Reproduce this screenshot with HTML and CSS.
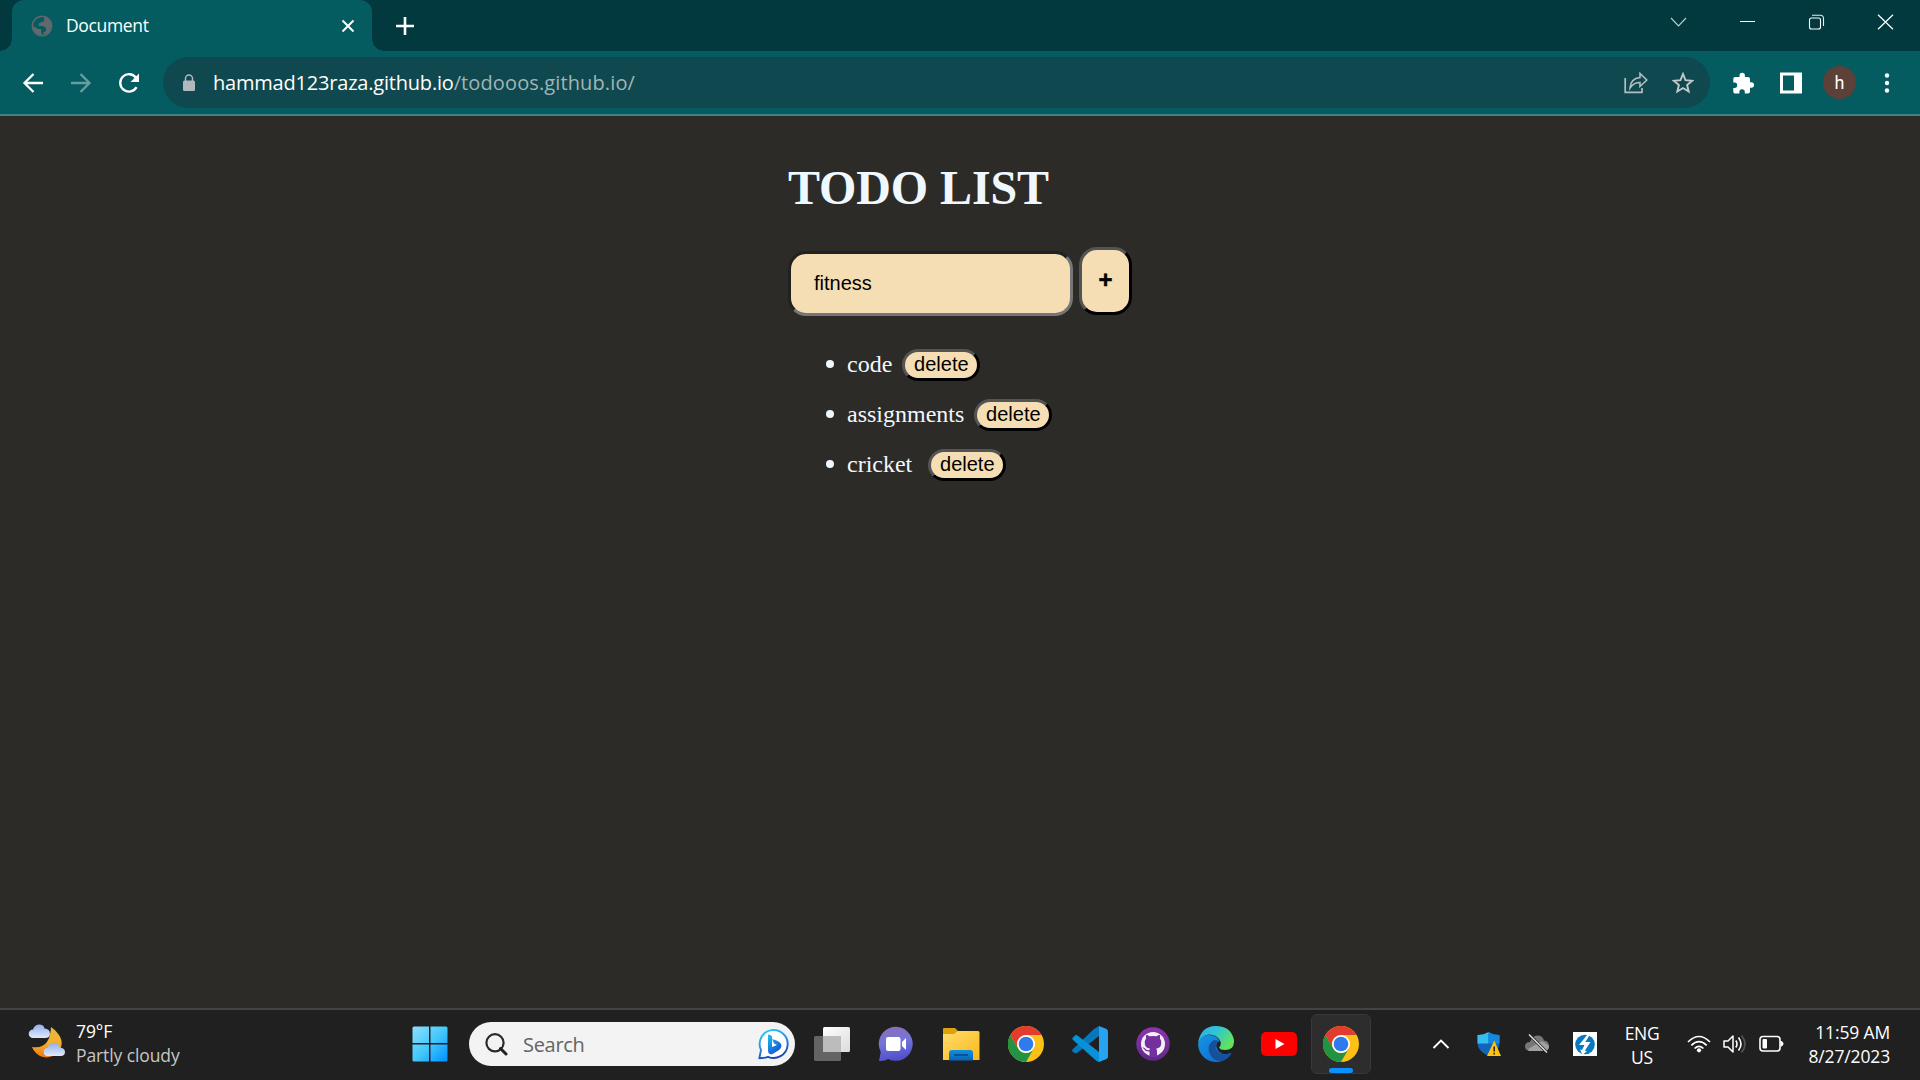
FILE: index.html
```html
<!DOCTYPE html>
<html lang="en">
<head>
<meta charset="utf-8">
<title>Document</title>
<link rel="stylesheet" href="styles.css">
</head>
<body>
<svg class="defs" width="0" height="0" aria-hidden="true">
  <defs>
    <linearGradient id="win" x1="0" y1="0" x2="1" y2="1"><stop offset="0" stop-color="#8be0ff"/><stop offset=".5" stop-color="#45c8fb"/><stop offset="1" stop-color="#0090ff"/></linearGradient>
    <linearGradient id="moon" x1="0" y1="0" x2="0" y2="1"><stop offset="0" stop-color="#e0b84c"/><stop offset=".5" stop-color="#f7b12c"/><stop offset="1" stop-color="#f07818"/></linearGradient>
    <linearGradient id="cloud" x1="0" y1="0" x2="0" y2="1"><stop offset="0" stop-color="#8fb0ee"/><stop offset="1" stop-color="#e2e9fb"/></linearGradient>
    <linearGradient id="bing" x1="0" y1="0" x2=".6" y2="1"><stop offset="0" stop-color="#1cc4f4"/><stop offset="1" stop-color="#1554d4"/></linearGradient>
    <linearGradient id="bingRing" x1="0" y1="0" x2=".4" y2="1"><stop offset="0" stop-color="#22d3ee"/><stop offset=".5" stop-color="#3294ea"/><stop offset="1" stop-color="#1747b8"/></linearGradient>
    <linearGradient id="chat" x1="0" y1="0" x2=".2" y2="1"><stop offset="0" stop-color="#8f6cb8"/><stop offset=".5" stop-color="#7276d8"/><stop offset="1" stop-color="#5450cc"/></linearGradient>
    <linearGradient id="folder" x1="0" y1="0" x2="1" y2="1"><stop offset="0" stop-color="#ffdc70"/><stop offset="1" stop-color="#fcb816"/></linearGradient>
    <linearGradient id="tray" x1="0" y1="0" x2="0" y2="1"><stop offset="0" stop-color="#1090e0"/><stop offset="1" stop-color="#0a63b4"/></linearGradient>
    <linearGradient id="git" x1="0" y1="0" x2="0" y2="1"><stop offset="0" stop-color="#8d35ae"/><stop offset="1" stop-color="#602889"/></linearGradient>
    <linearGradient id="edgeTop" x1="0" y1="0" x2="1" y2=".5"><stop offset="0" stop-color="#32a8f0"/><stop offset=".5" stop-color="#2fc5d4"/><stop offset="1" stop-color="#62e35c"/></linearGradient>
    <linearGradient id="edgeLeft" x1="0" y1="0" x2="1" y2="1"><stop offset="0" stop-color="#1596e4"/><stop offset="1" stop-color="#1262ca"/></linearGradient>
    <linearGradient id="task" x1="0" y1="0" x2="1" y2="1"><stop offset="0" stop-color="#fff"/><stop offset="1" stop-color="#dcdcdc"/></linearGradient>
    <symbol id="chrome" viewBox="0 0 36 36">
      <circle cx="18" cy="18" r="18" fill="#fbc116"/>
      <path d="M2.4 9A18 18 0 0 0 18 36L25.8 22.5A9 9 0 0 1 10.2 22.5Z" fill="#229342"/>
      <path d="M3.6 7.2 2.4 9 10.2 22.500 9 18A9 9 0 0 1 18 9H33.6A18 18 0 0 0 3.6 7.2Z" fill="#e33b2e"/>
      <circle cx="18" cy="18" r="9" fill="#fff"/><circle cx="18" cy="18" r="7.3" fill="#2f7bed"/>
    </symbol>
  </defs>
</svg>

<header class="tab-strip">
  <div class="tab">
    <svg class="favicon" width="22" height="22" viewBox="0 0 22 22"><circle cx="11" cy="11" r="9.7" fill="#045b60" stroke="#62686c" stroke-width="1.5"/><path d="M10 2Q5 2 2 8v3l5 3h3v2l1 4q-7 1-9-8Q1 1 10 2ZM13 2Q20 4 20 11q0 5-5 8-3 1-3-1l3-2v-3l-3-2H8V8l3-1q3 0 2-5Z" fill="#62686c"/></svg>
    <span class="tab-title">Document</span>
    <svg class="tab-close" width="14" height="14" viewBox="0 0 14 14"><path d="M1.5 1.5l11 11m0-11l-11 11" stroke="#fff" stroke-width="2"/></svg>
  </div>
  <svg class="new-tab" width="18" height="18" viewBox="0 0 18 18"><path d="M9 0v18M0 9h18" stroke="#fff" stroke-width="2.6"/></svg>
  <div class="window-controls">
    <svg width="17" height="16" viewBox="0 0 17 16"><path d="M1 4l7.5 8L16 4" fill="none" stroke="#bed0d1" stroke-width="1.1"/></svg>
    <svg width="17" height="16" viewBox="0 0 17 16"><path d="M1 7.5h15" stroke="#fff"/></svg>
    <svg width="17" height="16" viewBox="0 0 17 16"><rect x="1.5" y="4" width="11" height="11" rx="2" fill="none" stroke="#fff" stroke-width="1.1"/><path d="M4 1.3h8.5a3 3 0 0 1 3 3V12" fill="none" stroke="#e5eded" stroke-width="1.1"/></svg>
    <svg width="17" height="16" viewBox="0 0 17 16"><path d="M1 .8l15 14.5M16 .8L1 15.300" stroke="#fff" stroke-width="1.2"/></svg>
  </div>
</header>

<nav class="toolbar">
  <div class="nav-buttons">
    <svg width="22" height="22" viewBox="0 0 22 22"><path d="M21 11H3M11.500 2L2.500 11l9 9" fill="none" stroke="#fff" stroke-width="2.300"/></svg>
    <svg width="22" height="22" viewBox="0 0 22 22"><path d="M1 11h18M10.500 2l9 9-9 9" fill="none" stroke="#6a9da0" stroke-width="2.300"/></svg>
    <svg width="22" height="22" viewBox="0 0 22 22"><path d="M18.500 15.200A8.700 8.700 0 1 1 17.800 5.500" fill="none" stroke="#fff" stroke-width="2.400"/><path d="M21 1.500V10h-8.500Z" fill="#fff"/></svg>
  </div>
  <div class="omnibox">
    <svg width="12" height="18" viewBox="0 0 12 18"><path d="M2.500 8V4.500a3.500 3.500 0 0 1 7 0V8" fill="none" stroke="#b0b9bd" stroke-width="1.500"/><rect y="6.500" width="12" height="10.500" rx="1.500" fill="#b0b9bd"/></svg>
    <div class="url"><span class="host">hammad123raza.github.io</span><span class="path">/todooos.github.io/</span></div>
    <svg class="share" width="24" height="22" viewBox="0 0 24 22"><path d="M1.200 6v14.300H18V16" fill="none" stroke="#b2bfc1" stroke-width="1.700"/><path d="M6 16Q6.500 6.500 16 5.500V1.500L22.800 8 16 14.500V10.500Q9.500 10.500 6 16Z" fill="none" stroke="#b2bfc1" stroke-width="1.600"/></svg>
    <svg width="22" height="22" viewBox="0 0 22 22"><path d="M11 2l2.500 6.200 6.700.5-5.100 4.300 1.600 6.500L11 16l-5.700 3.500 1.600-6.500L1.800 8.700l6.700-.5Z" fill="none" stroke="#c1cacc" stroke-width="1.900"/></svg>
  </div>
  <div class="actions">
    <svg width="22" height="22" viewBox="0 0 22 22"><path d="M2 5h4.500V3.500a2.700 2.700 0 0 1 5.400 0V5H15q2 0 2 2v3.300h1.300a2.700 2.700 0 0 1 0 5.400H17V19.500q0 2-2 2h-3.200V20a2.700 2.700 0 0 0-5.400 0v1.500H2q-1.700 0-1.700-1.700V16H1.500a2.700 2.700 0 0 0 0-5.400H.3V7Q.3 5 2 5Z" fill="#fff"/></svg>
    <svg width="22" height="22" viewBox="0 0 22 22"><path d="M0 .5h22v21H0ZM3 3.500v15h11v-15Z" fill="#fff" fill-rule="evenodd"/></svg>
    <span class="avatar">h</span>
    <svg class="menu" width="6" height="20" viewBox="0 0 6 20"><circle cx="3" cy="2.500" r="2.200" fill="#fff"/><circle cx="3" cy="10" r="2.200" fill="#fff"/><circle cx="3" cy="17.500" r="2.200" fill="#fff"/></svg>
  </div>
</nav>

<main class="page">
  <div class="todo">
    <h1>TODO LIST</h1>
    <form class="entry">
      <input class="entry-input" type="text" value="fitness">
      <button class="add" type="button">+</button>
    </form>
    <ul class="items">
      <li>code<button class="delete" type="button">delete</button></li>
      <li>assignments<button class="delete" type="button">delete</button></li>
      <li>cricket&nbsp;<button class="delete" type="button">delete</button></li>
    </ul>
  </div>
</main>

<footer class="taskbar">
  <div class="weather">
    <svg width="38" height="36" viewBox="0 0 38 36"><path d="M23 3C30 8 38 17 31 27 23 37 9 35 4 23q18 3 19-20Z" fill="url(#moon)"/><path d="M5 14a4.300 4.300 0 0 1 0-8.600Q7 0 12 .5q4 .5 4.500 4Q22 5 22 9.500 22 14 17 14Z" fill="url(#cloud)"/><path d="M20 32a4 4 0 0 1-.5-8Q22 18 27.500 19q4.500 1 4.500 4.500 5 .5 5 4.500t-4.500 4Z" fill="url(#cloud)"/></svg>
    <div class="weather-text"><span>79°F</span><span class="muted">Partly cloudy</span></div>
  </div>
  <svg class="start" width="36" height="36" viewBox="0 0 36 36"><path d="M2 .5h15v16.500H.5V2Q.5.500 2 .5ZM18.500.500H34q1.500 0 1.500 1.500v15h-17ZM.5 18.500H17v17H2q-1.500 0-1.500-1.500ZM18.500 18.500h17V34q0 1.500-1.500 1.500H18.500Z" fill="url(#win)"/></svg>
  <div class="search">
    <svg width="23" height="23" viewBox="0 0 23 23"><circle cx="10" cy="9.800" r="8.600" fill="none" stroke="#2b2b2b" stroke-width="2.200"/><path d="M15.500 15.500l5.500 5.500" stroke="#222" stroke-width="3" stroke-linecap="round"/></svg>
    <span class="search-text">Search</span>
    <svg width="32" height="32" viewBox="0 0 32 32"><path d="M1.300 30.300L3 22A14 14 0 1 1 10 28.800Q7 30 1.300 30.300Z" fill="#fff" stroke="url(#bingRing)" stroke-width="1.900" stroke-linejoin="round"/><path d="M10 6.500q3 0 4 2V19l5-2-3-1.500-2-4.500q9 2 9.500 6.500 0 3-4 5.500l-5 3q-4.500 1-4.500-3.500Z" fill="url(#bing)"/></svg>
  </div>
  <div class="apps">
    <svg width="36" height="36" viewBox="0 0 36 36"><rect x="9" y="1" width="27" height="25" rx="1.500" fill="url(#task)"/><rect x="0" y="10" width="27" height="25" rx="1.500" fill="#6d6d6d" opacity=".88"/><path d="M9 10h18v16H9Z" fill="#bcbcbc"/></svg>
    <svg width="36" height="36" viewBox="0 0 36 36"><path d="M1 35L2.800 26A17 17 0 1 1 10 33Q7 35 1 35Z" fill="url(#chat)"/><rect x="8" y="11" width="14.500" height="14" rx="2" fill="#fff"/><path d="M24 16l4-4v12l-4-4Z" fill="#fff"/></svg>
    <svg width="38" height="36" viewBox="0 0 38 36"><path d="M2 2h11l4 4-3 3H1V3Q1 2 2 2Z" fill="#dda10c"/><path d="M1 8h11l4-3h20q1.500 0 1.500 1.500V34H1Z" fill="url(#folder)"/><path d="M7 34.500V27q0-3 3-3h18q3 0 3 3v7.500Z" fill="url(#tray)"/><path d="M12 29h14" stroke="#064a86" stroke-width="1.600"/></svg>
    <svg width="36" height="36"><use href="#chrome"/></svg>
    <svg width="36" height="36" viewBox="0 0 36 36"><path d="M.5 23.500L22 3l5-3v10L5 27Q3 28 1 26-.5 25 .5 23.500Z" fill="#0878bc"/><path d="M.5 12L3 9.500q1-.8 2.500 0L27 26v10l-3-1.500L1 14q-1-1-.5-2Z" fill="#0991d8"/><path d="M27 0l7.500 3Q36 4 36 5.500v25q0 1.500-1.500 2.500L27 36Z" fill="#27a3f2"/></svg>
    <svg width="34" height="34" viewBox="0 0 34 34"><circle cx="17" cy="17" r="16.700" fill="url(#git)"/><circle cx="17" cy="17" r="12" fill="#f3eff6"/><path d="M13.500 30v-5.500q-4 .5-5.500-2.500l-1.500-1.500q2-.5 3 1.500 2 2 4 1l.5-1.500Q8.500 21 8.700 15q0-2 1.300-3.200V8q2 0 3.500 1.300 3.500-.8 7 0Q22 8 24 8v3.800q1.300 1.200 1.300 3.200.2 6-5 6.500.7 1.500.7 3V30Z" fill="#74309c"/></svg>
    <svg width="36" height="36" viewBox="0 0 36 36"><path d="M0 18a18 18 0 0 0 24 17q7-2.500 9.500-8-12 4-15-6-1-4 3-6-3-7-12-6Q1 10 0 18Z" fill="url(#edgeLeft)"/><path d="M16 14q-7 4-5 12 3 9 12 9 7-2 10.500-8-10 4-15-3-2.500-5 2.500-9Z" fill="#164f9c"/><path d="M0 17Q3-.2 18 0q15 .2 18 14 .5 10-9 10-5 0-6-2.500 3-3 1-7-3-6-11-6Q3 9 0 17Z" fill="url(#edgeTop)"/></svg>
    <svg width="36" height="26" viewBox="0 0 36 26"><rect y="1" width="36" height="24" rx="5" fill="#f00"/><path d="M14.500 8l9 5-9 5Z" fill="#fff"/></svg>
    <div class="active-app"><svg width="36" height="36"><use href="#chrome"/></svg><i class="indicator"></i></div>
  </div>
  <div class="tray">
    <svg class="caret" width="18" height="12" viewBox="0 0 18 12"><path d="M1.500 10L9 2.500l7.500 7.500" fill="none" stroke="#fff" stroke-width="1.900"/></svg>
    <svg class="shield" width="24" height="26" viewBox="0 0 24 26"><path d="M.5 4Q7 4 11.500 1 16 4 22.500 4v8q0 8-11 13Q.5 20 .5 12Z" fill="#1066bb"/><path d="M.5 4Q7 4 11.500 1v11.500H.5Z" fill="#35bdf0"/><path d="M11.500 1Q16 4 22.500 4v8.500h-11Z" fill="#1488de"/><path d="M17.300 9.500L24 25H10Z" fill="#ffc20e"/><path d="M17.200 15.500v5m0 1.300v1.600" stroke="#222" stroke-width="1.500"/></svg>
    <svg class="onedrive" width="26" height="22" viewBox="0 0 26 22"><path d="M5 18Q1 17 1 13.500 1 9 6 9q2-6.500 7.500-6.500 5 0 6.500 5 5 .5 5 5.500T20 18Z" fill="#777"/><path d="M5 18Q3 16 6 15l9-5.500q3-2 6 .5l4 3q0 5-5 5Z" fill="#a1a1a1"/><path d="M5 1.500l18 18" stroke="#202020" stroke-width="3"/><path d="M5 1.500l18 18" stroke="#e5e5e5" stroke-width="1.400"/></svg>
    <svg class="power" width="24" height="24" viewBox="0 0 24 24"><path d="M0 0h24v24H0Z" fill="#fff"/><circle cx="12" cy="12.500" r="9.800" fill="#0879bf"/><path d="M16.500 0L6 13h5.500L9 18l-2-.5L9.500 23l4.500-4-2.200-.3L17.500 10h-5.200L18 1Z" fill="#fff"/></svg>
    <div class="language"><span>ENG</span><span>US</span></div>
    <svg class="wifi" width="24" height="18" viewBox="0 0 24 18"><g fill="none" stroke="#fff" stroke-width="1.700"><path d="M1 7q11-11 22 0M4.300 10.300q7.700-7.500 15.400 0M7.600 13.500q4.400-4.300 8.800 0"/></g><circle cx="12" cy="15.300" r="2.100" fill="#fff"/></svg>
    <svg class="speaker" width="24" height="20" viewBox="0 0 24 20"><path d="M1 7h4l5-5v16l-5-5H1Z" fill="none" stroke="#fff" stroke-width="1.500" stroke-linejoin="round"/><path d="M12.800 6.500q2.400 3.500 0 7M15.500 3.500q5 6.500 0 13" fill="none" stroke="#fff" stroke-width="1.600"/><path d="M18.500 1.500q7 8.500 0 17" fill="none" stroke="#555" stroke-width="1.600"/></svg>
    <svg class="battery" width="25" height="18" viewBox="0 0 25 18"><rect x="1" y="1.500" width="20" height="14.500" rx="3" fill="none" stroke="#fff" stroke-width="1.600"/><rect x="3.500" y="4" width="4.500" height="9.500" rx="1" fill="#fff"/><path d="M21.500 6h1q2 1 2 2.800t-2 2.800h-1Z" fill="#fff"/></svg>
    <div class="clock"><span>11:59 AM</span><span>8/27/2023</span></div>
  </div>
</footer>
</body>
</html>
```
FILE: styles.css
```css
* { box-sizing: border-box; }
body {
  margin: 0;
  width: 1920px;
  height: 1080px;
  overflow: hidden;
  display: flex;
  flex-direction: column;
  background: #2d2b28;
  font-family: "Open Sans", "Noto Sans", sans-serif;
  color: #fff;
}
svg { display: block; flex: none; }
.defs { position: absolute; }

/* Tab strip */
.tab-strip {
  height: 51px;
  display: flex;
  align-items: center;
  background: #02393e;
  padding: 0 26px 0 12px;
}
.tab {
  position: relative;
  width: 360px;
  height: 51px;
  display: flex;
  align-items: center;
  padding: 0 17px 0 19px;
  background: #045b60;
  border-radius: 12px 12px 0 0;
}
.tab::before, .tab::after {
  content: "";
  position: absolute;
  bottom: 0;
  width: 12px;
  height: 12px;
}
.tab::before { left: -12px; background: radial-gradient(circle at 0 0, #02393e 11.5px, #045b60 12px); }
.tab::after { right: -12px; background: radial-gradient(circle at 100% 0, #02393e 11.5px, #045b60 12px); }
.tab-title { flex: 1; margin-left: 13px; padding-bottom: 2px; font-size: 17.5px; letter-spacing: -0.35px; }
.new-tab { margin-left: 24px; }
.window-controls { margin-left: auto; display: flex; gap: 52px; padding-bottom: 8px; }

/* Toolbar */
.toolbar {
  height: 65px;
  display: flex;
  align-items: center;
  background: #045b60;
  border-bottom: 2px solid #3f8285;
  padding: 0 30px 0 22px;
}
.nav-buttons { display: flex; gap: 26px; width: 141px; }
.omnibox {
  width: 1547px;
  height: 51px;
  display: flex;
  align-items: center;
  border-radius: 26px;
  background: #0f484e;
  padding: 0 16px 0 20px;
}
.url { flex: 1; margin-left: 18px; font-size: 20px; letter-spacing: -0.2px; }
.host { color: #fff; }
.path { color: #a1b5b8; letter-spacing: 0.12px; }
.share { margin-right: 24px; }
.actions { flex: 1; display: flex; align-items: center; padding-left: 23px; }
.actions svg + svg { margin-left: 25px; }
.avatar {
  width: 33px;
  height: 33px;
  margin-left: 21px;
  border-radius: 50%;
  background: #5d4037;
  text-align: center;
  font: 18px/33px Roboto, sans-serif;
}
.menu { margin-left: auto; }

/* Todo page */
.page { flex: 1; padding-left: 788px; color: aliceblue; font-family: "Liberation Serif", serif; }
h1 { margin: 44px 0 0; font-size: 48px; line-height: 55px; letter-spacing: -0.1px; }
.entry { display: flex; align-items: flex-start; margin-top: 32px; }
.entry-input {
  width: 285px;
  height: 65px;
  margin-top: 4px;
  border: 3px inset #767676;
  border-radius: 18px;
  padding: 0 23px;
  background: wheat;
  color: #000;
  font: 20px "Liberation Sans", sans-serif;
}
.add {
  width: 53px;
  height: 68px;
  margin-left: 6px;
  border: 3px outset #000;
  border-radius: 18px;
  padding: 0 0 2px;
  background: wheat;
  color: #000;
  font: bold 24px "Liberation Sans", sans-serif;
  -webkit-text-stroke: 0.5px #000;
}
.items { margin: 25px 0 0; padding: 0 0 0 38px; list-style: none; font-size: 24px; }
.items li { height: 50px; display: flex; align-items: flex-start; line-height: 46px; }
.items li::before {
  content: "";
  width: 8px;
  height: 8px;
  margin: 19px 13px 0 0;
  border-radius: 50%;
  background: aliceblue;
}
.delete {
  width: 78px;
  height: 32px;
  margin: 8px 0 0 10px;
  border: 3px outset #000;
  border-radius: 16px;
  padding: 0 0 2px;
  background: wheat;
  color: #000;
  font: 20px/24px "Liberation Sans", sans-serif;
}

/* Taskbar */
.taskbar {
  height: 72px;
  display: flex;
  align-items: center;
  background: #202020;
  border-top: 2px solid #434343;
  padding: 0 30px 2px 28px;
  font-size: 17.5px;
  line-height: 24px;
}
.weather { display: flex; align-items: center; width: 384px; padding-bottom: 4px; }
.weather-text { display: flex; flex-direction: column; margin-left: 10px; letter-spacing: -0.1px; padding-top: 2px; }
.muted { color: #c6c6c6; }
.search {
  width: 326px;
  height: 44px;
  margin: 0 5px 0 21px;
  padding: 0 5px 0 16px;
  display: flex;
  align-items: center;
  border-radius: 22px;
  background: #f3f3f3;
}
.search-text { flex: 1; margin-left: 15px; padding-top: 1px; color: #636363; font-size: 20px; letter-spacing: -0.3px; }
.apps {
  display: grid;
  grid-template-columns: 64px 64px 66px 64px 64px 62px 64px 61px 63px;
  justify-items: center;
  align-items: center;
}
.active-app {
  position: relative;
  width: 60px;
  height: 60px;
  display: grid;
  place-items: center;
  background: #2d2d2d;
  border: 1px solid #383838;
  border-radius: 6px;
}
.indicator {
  position: absolute;
  left: 17px;
  bottom: 0;
  width: 24px;
  height: 5px;
  border-radius: 3px;
  background: #0a91ff;
}
.tray { flex: 1; display: flex; align-items: center; }
.caret { margin-left: 60px; }
.shield { margin-left: 27px; }
.onedrive { margin-left: 23px; }
.power { margin-left: 23px; }
.language { width: 36px; margin-left: 27px; padding-top: 1px; display: flex; flex-direction: column; align-items: center; letter-spacing: -0.3px; }
.wifi { margin-left: 27px; }
.speaker { margin-left: 12px; }
.battery { margin-left: 12px; }
.clock { margin-left: auto; padding-bottom: 1px; display: flex; flex-direction: column; align-items: flex-end; letter-spacing: -0.15px; }
```
